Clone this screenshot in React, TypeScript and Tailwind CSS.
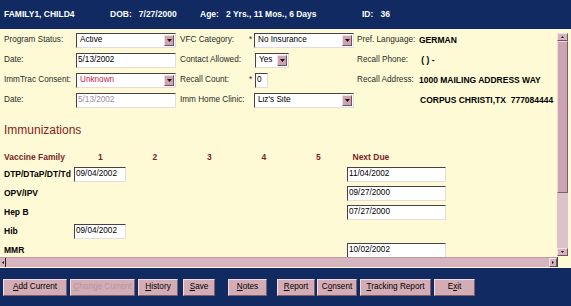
import type { ReactNode } from 'react'

const Field = ({ w, children, tone = 'text-black', ml = '' }: { w: string; children?: ReactNode; tone?: string; ml?: string }) => (
    <div
        className={`${w} ${ml} ${tone} h-[15px] bg-white border border-t-[#4a3f44] border-l-[#4a3f44] border-b-[#e6dcdc] border-r-[#e6dcdc] pl-[1px] flex items-center leading-none overflow-hidden whitespace-nowrap`}
    >
        {children}
    </div>
)

const Drop = ({ w, children, tone = 'text-black', ml = '' }: { w: string; children: ReactNode; tone?: string; ml?: string }) => (
    <div
        className={`${w} ${ml} h-[15px] bg-white border border-t-[#4a3f44] border-l-[#4a3f44] border-b-[#e6dcdc] border-r-[#e6dcdc] flex items-center`}
    >
        <span className={`flex-1 pl-[3px] leading-none whitespace-nowrap overflow-hidden ${tone}`}>{children}</span>
        {/* arrow */}
        <span className="w-[10px] h-[11px] mr-[1px] bg-[#cfa3b3] border border-t-[#f0e0e4] border-l-[#f0e0e4] border-b-[#6e5560] border-r-[#6e5560] flex items-center justify-center">
            <svg width="5" height="3" viewBox="0 0 5 3">
                <path d="M0 0h5L2.5 3z" fill="#111" />
            </svg>
        </span>
    </div>
)

const Btn = ({ ml, w, children, off = false }: { ml: string; w: string; children: ReactNode; off?: boolean }) => (
    <div
        className={`${ml} ${w} h-[17px] bg-[#d4acb6] border border-t-[#f0dde1] border-l-[#f0dde1] border-b-[#7d5f69] border-r-[#7d5f69] flex items-center justify-center leading-none ${off ? 'text-[#ad9aa2]' : 'text-black'}`}
    >
        {children}
    </div>
)

const vaccines = [
    { name: 'DTP/DTaP/DT/Td', first: '09/04/2002', next: '11/04/2002' },
    { name: 'OPV/IPV', first: '', next: '09/27/2000' },
    { name: 'Hep B', first: '', next: '07/27/2000' },
    { name: 'Hib', first: '09/04/2002', next: '' },
    { name: 'MMR', first: '', next: '10/02/2002' },
]

export default function App() {
    return (
        <div className="w-[571px] h-[306px] overflow-hidden font-['Liberation_Sans',Arial,sans-serif] text-[8.2px] bg-[#112a62]">
            {/* Header */}
            <div className="h-[29px] flex items-center text-white font-bold whitespace-nowrap text-[8.5px]">
                <span className="w-[110px] pl-[4px]">FAMILY1, CHILD4</span>
                <span className="w-[90px]">DOB:&nbsp;&nbsp;&nbsp;7/27/2000</span>
                <span className="w-[162px]">Age:&nbsp;&nbsp;&nbsp;2 Yrs., 11 Mos., 6 Days</span>
                <span>ID:&nbsp;&nbsp;&nbsp;36</span>
            </div>

            {/* Body */}
            <div className="h-[239px] bg-[#fffad6] flex flex-col">
                <div className="flex h-[228px]">
                    <div className="w-[557px] overflow-hidden pl-[4px] pt-[4px] text-[#2b2b2b]">
                        {/* Patient form */}
                        <div className="flex flex-col gap-[5px]">
                            <div className="flex items-center h-[15px]">
                                <span className="w-[72px]">Program Status:</span>
                                <Drop w="w-[100px]">Active</Drop>
                                <div className="w-[177px] ml-[4px] flex items-center">
                                    <span className="w-[69px]">VFC Category:</span>
                                    <span className="w-[5px]">*</span>
                                    <Drop w="w-[100px]">No Insurance</Drop>
                                </div>
                                <span className="w-[62px] whitespace-nowrap">Pref. Language:</span>
                                <span className="font-bold text-black text-[8.5px]">GERMAN</span>
                            </div>
                            <div className="flex items-center h-[15px]">
                                <span className="w-[72px]">Date:</span>
                                <Field w="w-[100px]">5/13/2002</Field>
                                <div className="w-[177px] ml-[4px] flex items-center">
                                    <span className="w-[75px]">Contact Allowed:</span>
                                    <Drop w="w-[34px]">Yes</Drop>
                                </div>
                                <span className="w-[62px]">Recall Phone:</span>
                                <span className="font-bold text-black text-[8.5px]">&nbsp;( ) -</span>
                            </div>
                            <div className="flex items-center h-[15px]">
                                <span className="w-[72px] whitespace-nowrap">ImmTrac Consent:</span>
                                <Drop w="w-[100px]" tone="text-[#d0204a]">Unknown</Drop>
                                <div className="w-[177px] ml-[4px] flex items-center">
                                    <span className="w-[69px]">Recall Count:</span>
                                    <span className="w-[6px]">*</span>
                                    <Field w="w-[13px]">0</Field>
                                </div>
                                <span className="w-[62px] whitespace-nowrap">Recall Address:</span>
                                <span className="font-bold text-black text-[8.5px]">1000 MAILING ADDRESS WAY</span>
                            </div>
                            <div className="flex items-center h-[15px]">
                                <span className="w-[72px]">Date:</span>
                                <Field w="w-[100px]" tone="text-[#9c8e9c]">5/13/2002</Field>
                                <div className="w-[177px] ml-[4px] flex items-center">
                                    <span className="w-[74px] whitespace-nowrap">Imm Home Clinic:</span>
                                    <Drop w="w-[100px]">Liz's Site</Drop>
                                </div>
                                <span className="w-[63px]" />
                                <span className="font-bold text-black text-[8.5px]">CORPUS CHRISTI,TX&nbsp;&nbsp;777084444</span>
                            </div>
                        </div>

                        {/* Immunizations */}
                        <h2 className="mt-[15px] h-[14px] leading-[14px] text-[12px] text-[#861a1a]">Immunizations</h2>

                        <div className="mt-[13px] flex items-center h-[14px] font-bold text-[8.5px] text-[#7a1f24]">
                            <span className="w-[69px] whitespace-nowrap">Vaccine Family</span>
                            <span className="w-[54.5px] text-center">1</span>
                            <span className="w-[54.5px] text-center">2</span>
                            <span className="w-[54.5px] text-center">3</span>
                            <span className="w-[54.5px] text-center">4</span>
                            <span className="w-[54.5px] text-center">5</span>
                            <span className="pl-[7px]">Next Due</span>
                        </div>

                        <div className="mt-[3px] flex flex-col gap-[4px]">
                            {vaccines.map((v) => (
                                <div key={v.name} className="flex items-center h-[15px] font-bold text-[8.5px] text-black">
                                    <span className="w-[69px] whitespace-nowrap">{v.name}</span>
                                    <div className="w-[54.5px]">
                                        {v.first && (
                                            <Field w="w-[52px]" ml="ml-[1px]">
                                                <span className="font-normal text-[8.2px]">{v.first}</span>
                                            </Field>
                                        )}
                                    </div>
                                    <div className="w-[218px]" />
                                    {v.next && (
                                        <Field w="w-[99px]" ml="ml-[1.5px]">
                                            <span className="font-normal text-[8.2px]">{v.next}</span>
                                        </Field>
                                    )}
                                </div>
                            ))}
                        </div>
                    </div>

                    {/* vertical scrollbar */}
                    <div className="w-[11px] mt-[4px] mb-[1px] flex flex-col bg-[#dcc2ca]">
                        <div className="h-[8px] bg-[#d7b3c0] border border-t-[#f3e3e7] border-l-[#f3e3e7] border-b-[#6e5560] border-r-[#6e5560] flex items-center justify-center">
                            <svg width="3" height="2" viewBox="0 0 3 2">
                                <path d="M0 2h3L1.5 0z" fill="#111" />
                            </svg>
                        </div>
                        <div className="h-[152px] bg-[#cda3b4] border border-t-[#eed9df] border-l-[#eed9df] border-b-[#7a5e69] border-r-[#7a5e69]" />
                        <div className="flex-1" />
                        <div className="h-[8px] bg-[#d7b3c0] border border-t-[#f3e3e7] border-l-[#f3e3e7] border-b-[#6e5560] border-r-[#6e5560] flex items-center justify-center">
                            <svg width="3" height="2" viewBox="0 0 3 2">
                                <path d="M0 0h3L1.5 2z" fill="#111" />
                            </svg>
                        </div>
                    </div>
                    <div className="w-[3px]" />
                </div>

                {/* horizontal scrollbar */}
                <div className="flex h-[10px]">
                    <div className="w-[557px] flex bg-[#d6b4c0] border-t border-[#bb97a5]">
                        <div className="w-[5px] flex items-center justify-center">
                            <svg width="2" height="3" viewBox="0 0 2 3">
                                <path d="M2 0v3L0 1.5z" fill="#111" />
                            </svg>
                        </div>
                        <div className="flex-1 border-l border-[#222]" />
                        <div className="w-[8px] bg-[#d7b3c0] border border-t-[#f3e3e7] border-l-[#f3e3e7] border-b-[#6e5560] border-r-[#6e5560] flex items-center justify-center">
                            <svg width="2" height="3" viewBox="0 0 2 3">
                                <path d="M0 0v3L2 1.5z" fill="#111" />
                            </svg>
                        </div>
                    </div>
                    <div className="w-[14px] border-l border-[#4a3f44]" />
                </div>
            </div>

            {/* Footer buttons */}
            <div className="pt-[11px] flex items-start">
                <Btn ml="ml-[3px]" w="w-[64px]"><span><u>A</u>dd Current</span></Btn>
                <Btn ml="ml-[3px]" w="w-[65px]" off><span><u>C</u>hange Current</span></Btn>
                <Btn ml="ml-[3px]" w="w-[40px]"><span><u>H</u>istory</span></Btn>
                <Btn ml="ml-[5px]" w="w-[32px]"><span><u>S</u>ave</span></Btn>
                <Btn ml="ml-[13px]" w="w-[39px]"><span><u>N</u>otes</span></Btn>
                <Btn ml="ml-[10px]" w="w-[38px]"><span><u>R</u>eport</span></Btn>
                <Btn ml="ml-[2px]" w="w-[40px]"><span>C<u>o</u>nsent</span></Btn>
                <Btn ml="ml-[3px]" w="w-[71px]"><span><u>T</u>racking Report</span></Btn>
                <Btn ml="ml-[3px]" w="w-[41px]"><span>E<u>x</u>it</span></Btn>
            </div>
        </div>
    )
}
